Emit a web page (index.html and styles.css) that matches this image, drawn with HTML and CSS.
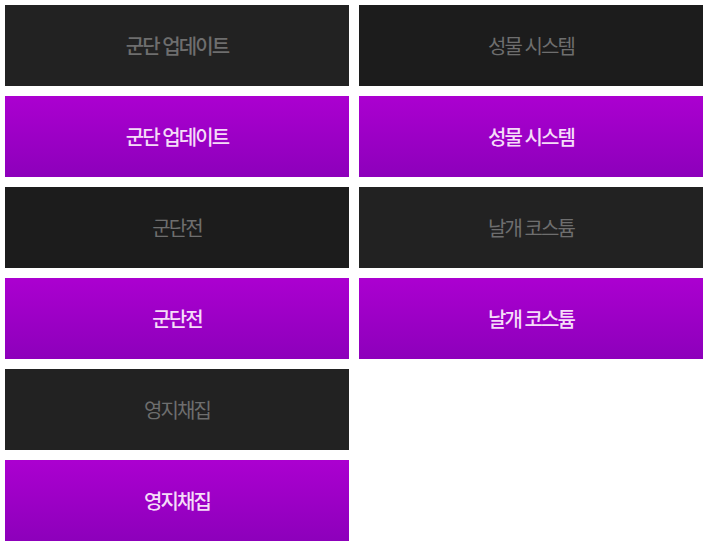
FILE: index.html
```html
<!DOCTYPE html>
<html lang="ko">
<head>
<meta charset="utf-8">
<link rel="stylesheet" href="styles.css">
</head>
<body>
<div class="board">
  <div class="col">
    <div class="tile dark bold">군단 업데이트</div>
    <div class="tile purple">군단 업데이트</div>
    <div class="tile dark darker">군단전</div>
    <div class="tile purple">군단전</div>
    <div class="tile dark">영지채집</div>
    <div class="tile purple">영지채집</div>
  </div>
  <div class="col">
    <div class="tile dark darker">성물 시스템</div>
    <div class="tile purple">성물 시스템</div>
    <div class="tile dark">날개 코스튬</div>
    <div class="tile purple">날개 코스튬</div>
  </div>
</div>
</body>
</html>
```
FILE: styles.css
```css
html, body {
  margin: 0;
  padding: 0;
  background: #ffffff;
}
body {
  padding: 5px;
  font-family: "Noto Sans CJK KR", "Noto Sans", sans-serif;
}
.board {
  display: flex;
  gap: 10px;
  align-items: flex-start;
}
.col {
  display: flex;
  flex-direction: column;
  gap: 10px;
  width: 344px;
}
.tile {
  height: 81px;
  display: flex;
  align-items: center;
  justify-content: center;
  font-size: 20px;
  letter-spacing: -1.9px;
  line-height: 1;
}
.dark {
  background: #222222;
  color: #6e6e6e;
}
.dark.darker {
  background: #1c1c1c;
}
.dark.bold {
  font-weight: 500;
}
.purple {
  background: linear-gradient(to bottom, #ab00d0, #8d00bb);
  color: #f5dcf8;
  font-weight: 500;
}
```
